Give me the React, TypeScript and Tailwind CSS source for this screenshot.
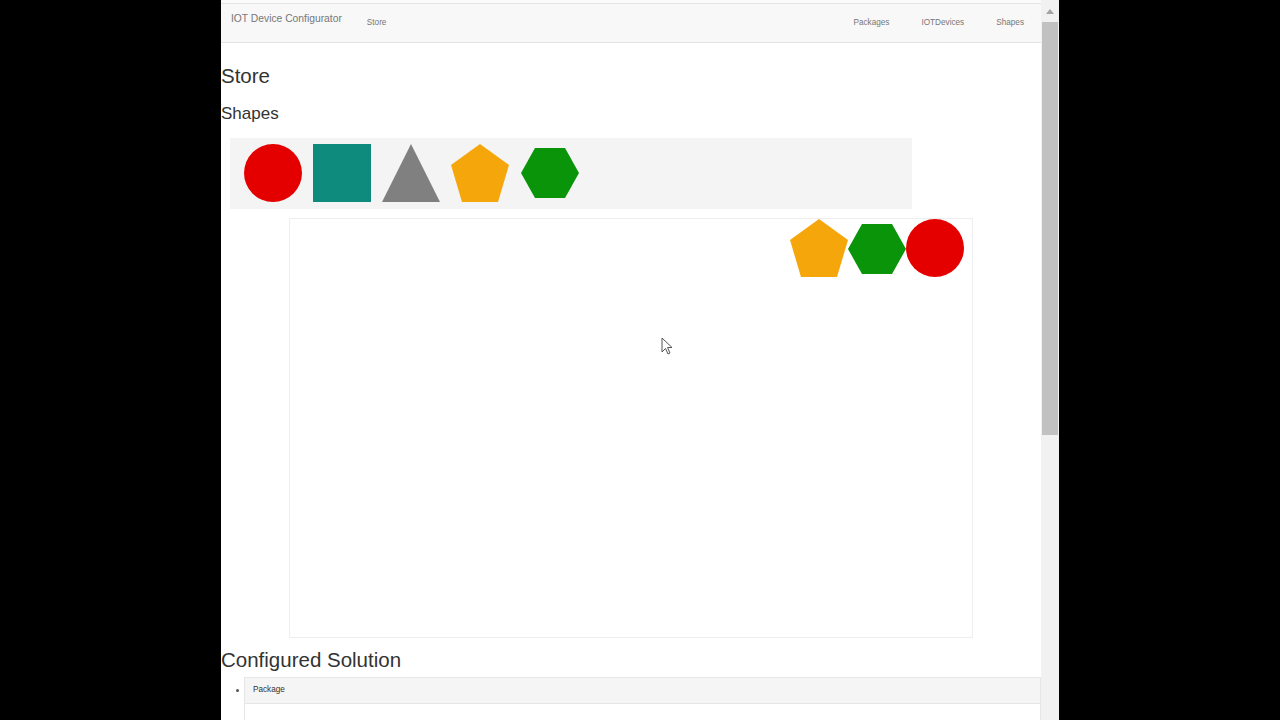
import React from "react"

const font = { fontFamily: '"Liberation Sans", Arial, Helvetica, sans-serif' }

function Circle({ size = 58 }: { size?: number }) {
  return (
    <svg width={size} height={size} viewBox="0 0 58 58">
      <circle cx="29" cy="29" r="29" fill="#e50000" />
    </svg>
  )
}

function Square() {
  return (
    <svg width="58" height="58" viewBox="0 0 58 58">
      <rect x="0" y="0" width="58" height="58" fill="#0f8b7d" />
    </svg>
  )
}

function Triangle() {
  return (
    <svg width="58" height="58" viewBox="0 0 58 58">
      <polygon points="29,0 58,58 0,58" fill="#808080" />
    </svg>
  )
}

function Pentagon() {
  return (
    <svg width="58" height="58" viewBox="0 0 58 58">
      <polygon points="29,0 58,21 47,58 11,58 0,21" fill="#f5a60b" />
    </svg>
  )
}

function Hexagon() {
  return (
    <svg width="58" height="50" viewBox="0 0 58 50">
      <polygon points="14,0 44,0 58,25 44,50 14,50 0,25" fill="#0a940a" />
    </svg>
  )
}

export default function App() {
  return (
    <div className="w-[1280px] h-[720px] bg-black flex overflow-hidden" style={font}>
      <div className="ml-[221px] w-[838px] h-[720px] bg-white flex relative overflow-hidden">
        {/* page */}
        <div className="w-[820px] shrink-0">
          <div className="h-[3px] bg-[#fbfbfb]" />
          <div className="h-[40px] bg-[#f8f8f8] border-t border-b border-[#e3e3e3] flex items-start">
            <div className="pl-[10px] pt-[7px] text-[10.3px] text-[#777]">IOT Device Configurator</div>
            <div className="ml-[25px] pt-[13px] text-[8.2px] text-[#777]">Store</div>
            <div className="ml-auto flex pt-[13px] text-[8.2px] text-[#777] pr-[1px]">
              <div className="px-4">Packages</div>
              <div className="px-4">IOTDevices</div>
              <div className="px-4">Shapes</div>
            </div>
          </div>

          <h1 className="mt-[22px] text-[20.5px] leading-[22px] text-[#333]">Store</h1>
          <h2 className="mt-[17px] text-[17px] leading-[19px] text-[#333]">Shapes</h2>

          <div className="mt-[15px] ml-[9px] w-[682px] h-[71px] bg-[#f4f4f4] flex items-start gap-[11px] pl-[14px] pt-[6px]">
            <Circle />
            <Square />
            <Triangle />
            <Pentagon />
            <div className="mt-[4px] ml-[1px]">
              <Hexagon />
            </div>
          </div>

          <div className="mt-[9px] ml-[68px] w-[684px] h-[420px] border border-[#eeeeee] relative">
            <div className="absolute left-[500px] top-0">
              <Pentagon />
            </div>
            <div className="absolute left-[558px] top-[5px]">
              <Hexagon />
            </div>
            <div className="absolute left-[616px] top-0">
              <Circle />
            </div>
          </div>

          <h1 className="mt-[11px] text-[20.5px] leading-[22px] text-[#333]">Configured Solution</h1>
          <ul className="mt-[6px]">
            <li className="flex w-full">
              <div className="w-[23px] flex justify-end pr-[5px] pt-[12px]">
                <div className="w-[3px] h-[3px] rounded-full bg-[#555]" />
              </div>
              <div className="flex-1 border border-[#e6e6e6]">
                <div className="h-[26px] bg-[#f5f5f5] border-b border-[#e6e6e6] pl-[8px] flex items-center text-[8.2px] text-[#333]">
                  Package
                </div>
                <div className="h-[40px] bg-white" />
              </div>
            </li>
          </ul>
        </div>

        {/* scrollbar */}
        <div className="w-[18px] h-[720px] shrink-0 bg-[#f1f1f1] flex flex-col items-center">
          <div className="h-[22px] w-full flex items-center justify-center shrink-0">
            <svg width="8" height="5" viewBox="0 0 8 5">
              <polygon points="4,0 8,5 0,5" fill="#a3a3a3" />
            </svg>
          </div>
          <div className="w-[16px] h-[413px] shrink-0 bg-[#c1c1c1]" />
        </div>

        {/* mouse pointer */}
        <svg className="absolute left-[440px] top-[337px]" width="14" height="19" viewBox="0 0 14 19">
          <path d="M1 1 L1 15 L4.5 11.5 L7 17 L9 16 L6.5 10.5 L11 10.5 Z" fill="white" stroke="#555" strokeWidth="1" />
        </svg>
      </div>
    </div>
  )
}
